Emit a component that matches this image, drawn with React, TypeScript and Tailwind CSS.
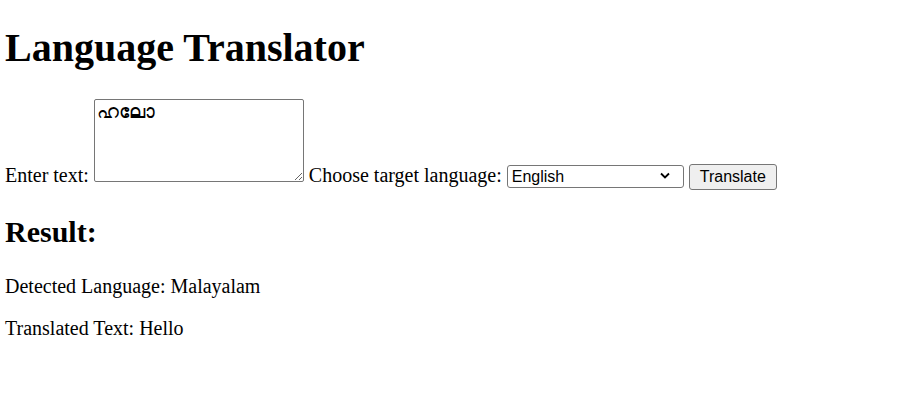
const Chevron = () => (
  <svg
    width="10"
    height="7"
    viewBox="0 0 10 7"
    className="pointer-events-none absolute right-[14px] top-[8px]"
  >
    <path d="M1 1.5 L5 5.5 L9 1.5" fill="none" stroke="#000" strokeWidth="1.8" />
  </svg>
);

export default function App() {
  return (
    <div className="min-h-[402px] bg-white px-[5px] font-['Liberation_Serif','Times_New_Roman',serif] text-[20px] text-black">
      <h1 className="pt-[25px] text-[40px] font-bold leading-[46px]">
        Language Translator
      </h1>

      <div className="mt-[28px] leading-[22px]">
        Enter text:{" "}
        <textarea
          defaultValue="ഹലോ"
          className="inline-block h-[83px] w-[210px] rounded-[2px] border border-[#767676] bg-white px-[2px] py-[2px] align-baseline font-['Liberation_Mono','Noto_Sans',monospace] text-[19px] leading-[22px]"
        />{" "}
        Choose target language:{" "}
        <span className="relative inline-block align-baseline">
          <select
            defaultValue="en"
            className="h-[23px] w-[177px] appearance-none rounded-[3px] border border-[#767676] bg-white pl-[4px] font-['Liberation_Sans',Arial,sans-serif] text-[16px] leading-[19px]"
          >
            <option value="en">English</option>
            <option value="ml">Malayalam</option>
            <option value="hi">Hindi</option>
          </select>
          <Chevron />
        </span>{" "}
        <button
          type="button"
          className="h-[26px] w-[88px] rounded-[3px] border border-[#767676] bg-[#efefef] font-['Liberation_Sans',Arial,sans-serif] text-[16px] leading-[19px]"
        >
          Translate
        </button>
      </div>

      <h2 className="mt-[25px] text-[30px] font-bold leading-[34px]">
        Result:
      </h2>
      <p className="mt-[26px] leading-[22px]">Detected Language: Malayalam</p>
      <p className="mt-[20px] leading-[22px]">Translated Text: Hello</p>
    </div>
  );
}
